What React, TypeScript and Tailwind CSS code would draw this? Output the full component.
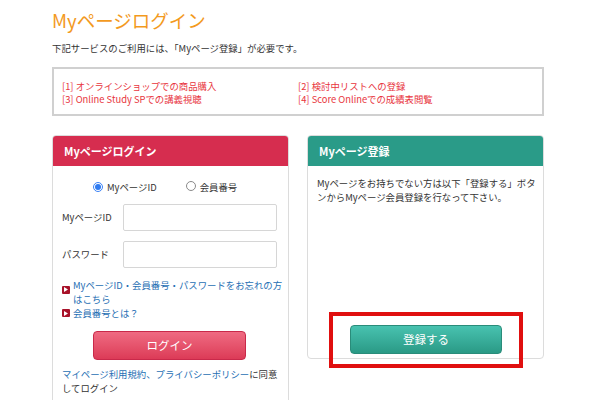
const font = { fontFamily: '"Noto Sans CJK JP", "Noto Sans", sans-serif' };

function LinkIcon() {
  return (
    <span className="mr-[3px] inline-flex h-[8px] w-[8px] shrink-0 items-center justify-center rounded-[1px] bg-[#a8122a]">
      <svg width="4" height="5" viewBox="0 0 4 5">
        <path d="M0 0 L4 2.5 L0 5 Z" fill="#fff" />
      </svg>
    </span>
  );
}

function Radio({ checked }: { checked?: boolean }) {
  return (
    <span
      className={
        'inline-flex h-[10px] w-[10px] items-center justify-center rounded-full border ' +
        (checked ? 'border-[#3b82f6] bg-white' : 'border-[#8a8a8a] bg-white')
      }
    >
      {checked && <span className="h-[6px] w-[6px] rounded-full bg-[#2f7bf0]" />}
    </span>
  );
}

export default function App() {
  return (
    <div className="h-[400px] w-[600px] overflow-hidden bg-white text-[#333]" style={font}>
      <div className="ml-[52px] w-[492px]">
        <h1 className="pt-[6px] text-[18.5px] leading-[28px] text-[#f39a1e]">Myページログイン</h1>
        <p className="mt-[7px] text-[9.4px] leading-[14px]">
          下記サービスのご利用には、「Myページ登録」が必要です。
        </p>

        <div className="mt-[12px] grid h-[49px] grid-cols-[236px_1fr] content-center border-2 border-[#d0d0d0] pl-[8px] pt-[3px] text-[9.4px] leading-[13px] text-[#e8343d]">
          <span>[1] オンラインショップでの商品購入</span>
          <span>[2] 検討中リストへの登録</span>
          <span>[3] Online Study SPでの講義視聴</span>
          <span>[4] Score Onlineでの成績表閲覧</span>
        </div>

        <div className="mt-[19px] flex items-start gap-[18px]">
          {/* login panel */}
          <div className="w-[237px] overflow-hidden rounded-t-[4px] border border-[#dcdcdc]">
            <div className="flex h-[30px] items-center bg-[#d62d4f] pl-[11px] text-[11px] font-bold text-white">
              Myページログイン
            </div>
            <div className="h-[240px] pl-[9px] pr-[11px]">
              <div className="mt-[15px] flex items-center pl-[31px] text-[9.4px] leading-[12px]">
                <Radio checked />
                <span className="ml-[4px]">MyページID</span>
                <span className="ml-[29px]">
                  <Radio />
                </span>
                <span className="ml-[4px]">会員番号</span>
              </div>
              <div className="mt-[11px] flex items-center justify-between">
                <span className="text-[9.4px]">MyページID</span>
                <div className="h-[27px] w-[154px] rounded-[2px] border border-[#d6d6d6] bg-white" />
              </div>
              <div className="mt-[10px] flex items-center justify-between">
                <span className="text-[9.4px]">パスワード</span>
                <div className="h-[27px] w-[154px] rounded-[2px] border border-[#d6d6d6] bg-white" />
              </div>
              <div className="mt-[10px] whitespace-nowrap text-[9.4px] leading-[14px] text-[#1f6fb4]">
                <div className="flex">
                  <span className="mt-[3px]">
                    <LinkIcon />
                  </span>
                  <span>
                    MyページID・会員番号・パスワードをお忘れの方
                    <br />
                    はこちら
                  </span>
                </div>
                <div className="flex items-center">
                  <LinkIcon />
                  <span>会員番号とは？</span>
                </div>
              </div>
              <div className="mt-[11px] flex justify-center">
                <button className="h-[29px] w-[153px] rounded-[4px] border border-[#c9294a] bg-gradient-to-b from-[#ef6a82] to-[#dc3a57] text-[11.5px] text-white">
                  ログイン
                </button>
              </div>
              <p className="mt-[7px] whitespace-nowrap text-[9.4px] leading-[14px]">
                <span className="text-[#1f6fb4]">マイページ利用規約、プライバシーポリシー</span>に同意
                <br />
                してログイン
              </p>
            </div>
          </div>

          {/* register panel */}
          <div className="relative flex h-[224px] w-[237px] flex-col rounded-[4px] border border-[#dcdcdc]">
            <div className="flex h-[30px] items-center rounded-t-[3px] bg-[#2a9b88] pl-[11px] text-[11px] font-bold text-white">
              Myページ登録
            </div>
            <p className="mt-[10px] whitespace-nowrap px-[9px] text-[9.4px] leading-[14px]">
              Myページをお持ちでない方は以下「登録する」ボタ
              <br />
              ンからMyページ会員登録を行なって下さい。
            </p>
            <div className="mt-auto mb-[4px] flex justify-center pl-[1px]">
              <button className="h-[29px] w-[152px] rounded-[4px] border border-[#2a8c7a] bg-gradient-to-b from-[#48c2b0] to-[#2a9a86] text-[11.5px] text-white">
                登録する
              </button>
            </div>
            <div className="absolute left-[21px] top-[176px] h-[56px] w-[194px] border-[4px] border-[#e00f0f]" />
          </div>
        </div>
      </div>
    </div>
  );
}
